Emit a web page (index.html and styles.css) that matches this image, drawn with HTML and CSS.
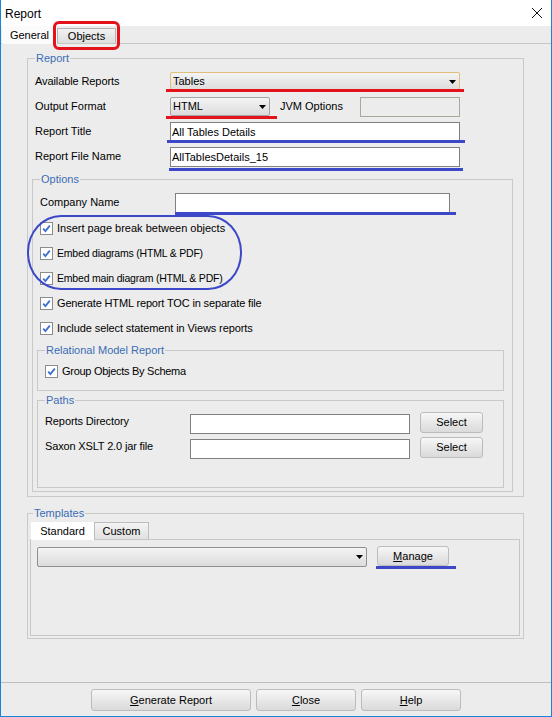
FILE: index.html
```html
<!DOCTYPE html>
<html>
<head>
<meta charset="utf-8">
<link rel="stylesheet" href="styles.css">
</head>
<body>
<div class="window">
  <div class="titlebar">
    <span class="title">Report</span>
    <svg class="close" width="10" height="10" viewBox="0 0 10 10"><path d="M0 0 L10 10 M10 0 L0 10" stroke="#111" stroke-width="1" fill="none"/></svg>
  </div>
  <div class="tabs">
    <div class="tab tab-active">General</div>
    <div class="tab tab-objects">Objects<span class="mark-box"></span></div>
  </div>
  <div class="tabpanel">
    <div class="grp grp-report">
      <div class="legend">Report</div>
      <div class="row row-first">
        <span class="lbl cond1">Available Reports</span>
        <div class="combo combo-focus w290"><span>Tables</span><svg class="arrow" width="7" height="4" viewBox="0 0 7 4"><polygon points="0,0 7,0 3.5,4" fill="#000"/></svg></div>
        <span class="mark red m-avail"></span>
      </div>
      <div class="row">
        <span class="lbl">Output Format</span>
        <div class="combo w100"><span>HTML</span><svg class="arrow" width="7" height="4" viewBox="0 0 7 4"><polygon points="0,0 7,0 3.5,4" fill="#000"/></svg></div>
        <span class="lbl-jvm">JVM Options</span>
        <div class="field field-disabled w100"></div>
        <span class="mark red m-output"></span>
      </div>
      <div class="row">
        <span class="lbl">Report Title</span>
        <div class="field w290">All Tables Details</div>
        <span class="mark blue m-title"></span>
      </div>
      <div class="row">
        <span class="lbl">Report File Name</span>
        <div class="field w290">AllTablesDetails_15</div>
        <span class="mark blue m-file"></span>
      </div>

      <div class="grp grp-options">
        <div class="legend">Options</div>
        <span class="ellipse"></span>
        <div class="row row-company">
          <span class="lbl">Company Name</span>
          <div class="field w275"></div>
          <span class="mark blue m-company"></span>
        </div>
        <div class="check check-first">
          <svg class="cb" width="13" height="13" viewBox="0 0 13 13"><rect x="0.5" y="0.5" width="12" height="12" fill="#fff" stroke="#8c8c8c"/><path d="M3.2 6.6 L5.4 9 L9.8 3.6" fill="none" stroke="#3c6fce" stroke-width="1.8"/></svg>
          <span>Insert page break between objects</span>
        </div>
        <div class="check">
          <svg class="cb" width="13" height="13" viewBox="0 0 13 13"><rect x="0.5" y="0.5" width="12" height="12" fill="#fff" stroke="#8c8c8c"/><path d="M3.2 6.6 L5.4 9 L9.8 3.6" fill="none" stroke="#3c6fce" stroke-width="1.8"/></svg>
          <span class="caps">Embed diagrams (HTML &amp; PDF)</span>
        </div>
        <div class="check">
          <svg class="cb" width="13" height="13" viewBox="0 0 13 13"><rect x="0.5" y="0.5" width="12" height="12" fill="#fff" stroke="#8c8c8c"/><path d="M3.2 6.6 L5.4 9 L9.8 3.6" fill="none" stroke="#3c6fce" stroke-width="1.8"/></svg>
          <span class="caps">Embed main diagram (HTML &amp; PDF)</span>
        </div>
        <div class="check">
          <svg class="cb" width="13" height="13" viewBox="0 0 13 13"><rect x="0.5" y="0.5" width="12" height="12" fill="#fff" stroke="#8c8c8c"/><path d="M3.2 6.6 L5.4 9 L9.8 3.6" fill="none" stroke="#3c6fce" stroke-width="1.8"/></svg>
          <span class="cond2">Generate HTML report TOC in separate file</span>
        </div>
        <div class="check">
          <svg class="cb" width="13" height="13" viewBox="0 0 13 13"><rect x="0.5" y="0.5" width="12" height="12" fill="#fff" stroke="#8c8c8c"/><path d="M3.2 6.6 L5.4 9 L9.8 3.6" fill="none" stroke="#3c6fce" stroke-width="1.8"/></svg>
          <span class="cond1">Include select statement in Views reports</span>
        </div>

        <div class="grp grp-rel">
          <div class="legend">Relational Model Report</div>
          <div class="check check-rel">
            <svg class="cb" width="13" height="13" viewBox="0 0 13 13"><rect x="0.5" y="0.5" width="12" height="12" fill="#fff" stroke="#8c8c8c"/><path d="M3.2 6.6 L5.4 9 L9.8 3.6" fill="none" stroke="#3c6fce" stroke-width="1.8"/></svg>
            <span class="cond3">Group Objects By Schema</span>
          </div>
        </div>

        <div class="grp grp-paths">
          <div class="legend">Paths</div>
          <div class="prow prow-first">
            <span class="lbl-path cond1">Reports Directory</span>
            <div class="field w220"></div>
            <div class="btn btn-select">Select</div>
          </div>
          <div class="prow">
            <span class="lbl-path cond2">Saxon XSLT 2.0 jar file</span>
            <div class="field w220"></div>
            <div class="btn btn-select">Select</div>
          </div>
        </div>
      </div>
    </div>

    <div class="grp grp-templates">
      <div class="legend">Templates</div>
      <div class="ttabs">
        <div class="ttab ttab-active">Standard</div>
        <div class="ttab">Custom</div>
      </div>
      <div class="tpanel">
        <div class="trow">
          <div class="combo w330 combo-tpl"><span></span><svg class="arrow" width="7" height="4" viewBox="0 0 7 4"><polygon points="0,0 7,0 3.5,4" fill="#000"/></svg></div>
          <div class="btn btn-manage"><span><u>M</u>anage</span><span class="mark blue m-manage"></span></div>
        </div>
      </div>
    </div>
  </div>
  <div class="buttons">
    <div class="btn btn-gen"><u>G</u>enerate Report</div>
    <div class="btn btn-std"><u>C</u>lose</div>
    <div class="btn btn-std"><u>H</u>elp</div>
  </div>
</div>
</body>
</html>
```
FILE: styles.css
```css
* { box-sizing: border-box; }
html, body { margin: 0; padding: 0; }
body {
  width: 552px;
  height: 717px;
  overflow: hidden;
  background: #ffffff;
  font-family: "Liberation Sans", Arial, sans-serif;
  font-size: 11px;
  line-height: 13px;
  color: #000;
}
.window {
  width: 552px;
  height: 717px;
  border: 1px solid #1883d7;
  border-top: 0;
  background: #ececec;
  display: flex;
  flex-direction: column;
}
.titlebar {
  flex: none;
  height: 26px;
  background: #ffffff;
  display: flex;
  align-items: center;
  justify-content: space-between;
  padding: 2px 9px 0 4px;
  font-size: 12px;
}
.title { line-height: 14px; }
.close { display: block; margin-top: -2px; }

/* top tabs */
.tabs {
  flex: none;
  height: 17px;
  display: flex;
  align-items: flex-end;
  padding-left: 1px;
}
.tab {
  display: flex;
  align-items: center;
  justify-content: center;
}
.tab-active {
  width: 55px;
  height: 18px;
  margin-bottom: -1px;
  background: #fbfbfb;
  position: relative;
  z-index: 1;
}
.tab-objects {
  width: 59px;
  height: 15px;
  border: 1px solid #b5b5b5;
  border-bottom: 0;
  background: linear-gradient(#f1f1f1, #dedede);
  position: relative;
  z-index: 2;
}
.tabpanel {
  flex: none;
  height: 640px;
  border-top: 1px solid #c6c6c6;
  border-bottom: 1px solid #bdbdbd;
}

/* group boxes */
.grp {
  border: 1px solid #c9c9c9;
  position: relative;
}
.legend {
  margin-top: -7px;
  margin-left: 3px;
  padding: 0 1px;
  width: max-content;
  height: 13px;
  line-height: 13px;
  background: #ececec;
  color: #3b6cb4;
}
.grp-report {
  margin: 14px 0 0 26px;
  width: 497px;
  padding: 0 10px 4px 4px;
}
.grp-options {
  margin-top: 12px;
  padding: 0 8px 3px 4px;
}
.grp-rel {
  margin-top: 11px;
  padding: 0 8px 8px 4px;
}
.grp-paths {
  margin-top: 9px;
  padding: 0 8px 28px 4px;
}
.grp-templates {
  margin: 16px 0 0 26px;
  width: 497px;
  padding: 0 3px 2px 2px;
}

/* rows */
.row {
  display: flex;
  align-items: flex-start;
  height: 20px;
  margin-top: 5px;
  padding-left: 3px;
  position: relative;
}
.row-first { margin-top: 7px; }
.row-company { margin-top: 7px; }
.lbl {
  width: 135px;
  flex: none;
  height: 20px;
  line-height: 18px;
}
.lbl-jvm {
  width: 80px;
  margin-left: 10px;
  height: 20px;
  line-height: 19px;
}

/* slight condensing to approximate Tahoma's narrower capitals */
.cond1 { letter-spacing: -0.1px; }
.cond2 { letter-spacing: -0.15px; }
.cond3 { letter-spacing: -0.28px; }
.caps { font-size: 10.5px; letter-spacing: -0.2px; }

.combo {
  height: 19px;
  display: flex;
  align-items: center;
  justify-content: space-between;
  padding: 0 3px 0 2px;
  border: 1px solid #a4a4a4;
  border-radius: 2px;
  background: linear-gradient(#f4f4f4, #e9e9e9 45%, #dcdcdc);
}
.combo-focus {
  border-color: #e2be79;
}
.combo-tpl {
  height: 20px;
  margin-top: 1px;
  border-color: #8f8f8f;
}
.arrow { display: block; }

.field {
  height: 20px;
  background: #ffffff;
  border: 1px solid #808080;
  padding: 0 1px;
  display: flex;
  align-items: center;
}
.field-disabled {
  background: #ececec;
  border-color: #a9a99c;
}
.w290 { width: 290px; }
.w100 { width: 100px; }
.w275 { width: 275px; }
.w220 { width: 220px; }
.w330 { width: 330px; }

/* checkboxes */
.check {
  display: flex;
  align-items: center;
  height: 21px;
  margin-top: 4px;
  padding-left: 3px;
}
.check-first { margin-top: 5px; }
.check .cb { display: block; flex: none; margin-right: 4px; }
.check span { margin-top: -1px; }

/* paths rows */
.prow {
  display: flex;
  align-items: flex-start;
  height: 22px;
  margin-top: 3px;
  padding-left: 3px;
}
.prow-first { margin-top: 5px; }
.lbl-path {
  width: 145px;
  flex: none;
  height: 22px;
  line-height: 19px;
}
.prow .field { margin-top: 2px; }

/* buttons */
.btn {
  display: flex;
  align-items: center;
  justify-content: center;
  border: 1px solid #bcbcbc;
  border-radius: 3px;
  background: linear-gradient(#f7f7f7, #e8e8e8 50%, #dadada);
}
.btn u { text-decoration: underline; }
.btn-select {
  width: 63px;
  height: 21px;
  margin-left: 10px;
}

/* templates tabs */
.ttabs {
  margin-top: 2px;
  height: 17px;
  display: flex;
  align-items: flex-end;
  padding-left: 1px;
}
.ttab {
  width: 55px;
  height: 17px;
  display: flex;
  align-items: center;
  justify-content: center;
  border: 1px solid #bdbdbd;
  border-bottom: 0;
  background: linear-gradient(#f3f3f3, #e1e1e1);
}
.ttab-active {
  width: 63px;
  height: 18px;
  margin-bottom: -1px;
  border: 0;
  background: #ffffff;
  position: relative;
  z-index: 1;
}
.tpanel {
  height: 97px;
  border: 1px solid #c6c6c6;
  padding-left: 6px;
}
.trow {
  display: flex;
  align-items: flex-start;
  margin-top: 6px;
}
.btn-manage {
  width: 72px;
  height: 20px;
  margin-left: 10px;
  position: relative;
}

/* bottom buttons */
.buttons {
  flex: none;
  height: 33px;
  display: flex;
  align-items: flex-start;
  gap: 5px;
  padding: 6px 0 0 90px;
}
.btn-gen { width: 160px; height: 22px; }
.btn-std { width: 100px; height: 22px; }

/* annotations drawn over the screenshot */
.mark {
  position: absolute;
  height: 3px;
  display: block;
}
.red { background: #e5121c; }
.blue { background: #3d48c8; }
.m-avail { left: 134px; top: 17px; width: 298px; }
.m-output { left: 134px; top: 19px; width: 111px; }
.m-title { left: 135px; top: 18px; width: 298px; }
.m-file { left: 137px; top: 21px; width: 294px; }
.m-company { left: 138px; top: 19px; width: 281px; }
.m-manage { left: -2px; top: 19px; width: 80px; }
.mark-box {
  position: absolute;
  left: -5px;
  top: -8px;
  width: 67px;
  height: 29px;
  border: 3px solid #e5121c;
  border-radius: 6px;
}
.ellipse {
  position: absolute;
  left: -6px;
  top: 35px;
  width: 215px;
  height: 75px;
  border: 2px solid #3d48c8;
  border-radius: 34px / 37px;
}
```
